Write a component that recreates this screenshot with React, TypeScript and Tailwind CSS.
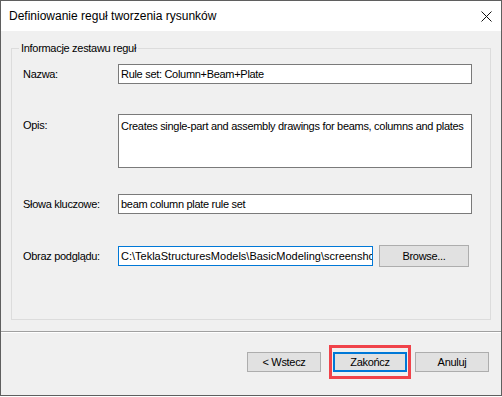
const font = { fontFamily: '"Liberation Sans", Arial, sans-serif' };

const Field = ({ value, focused = false, w = 'w-[354px]' }: { value: string; focused?: boolean; w?: string }) => (
  <div
    className={`${w} h-[20px] bg-white border ${
      focused ? 'border-[#0078d7] tracking-normal' : 'border-[#7a7a7a]'
    } flex items-center pl-[2px] overflow-hidden whitespace-nowrap`}
  >
    {value}
  </div>
);

const Btn = ({ label, focused = false }: { label: string; focused?: boolean }) => (
  <button
    className={`h-[20px] bg-[#e1e1e1] flex items-center justify-center text-[11px] text-black ${
      focused ? 'w-[74px] border-2 border-[#0078d7]' : 'w-[74px] border border-[#adadad]'
    }`}
  >
    {label}
  </button>
);

export default function App() {
  return (
    <div className="w-[502px] h-[397px] bg-white text-[11px] text-black" style={font}>
      <div className="w-[502px] h-[396px] border border-[#5f5f5f] flex flex-col">
        {/* title bar */}
        <div className="h-[30px] bg-white flex items-center justify-between pl-[8px] pr-[9px]">
          <span className="text-[12px]">Definiowanie reguł tworzenia rysunków</span>
          <svg width="11" height="11" viewBox="0 0 11 11" className="mt-[1px]">
            <path d="M0.5 0.5 L10.5 10.5 M10.5 0.5 L0.5 10.5" stroke="#111" strokeWidth="1" />
          </svg>
        </div>

        <div className="flex-1 bg-[#f0f0f0] flex flex-col tracking-[-0.3px]">
          {/* group box */}
          <div className="relative mt-[17px] ml-[10px] w-[480px] h-[272px] border border-[#dcdcdc]">
            <span className="absolute -top-[8px] left-[7px] px-[2px] bg-[#f0f0f0] leading-[15px]">
              Informacje zestawu reguł
            </span>

            <div className="flex items-center mt-[15px]">
              <span className="w-[106px] pl-[11px]">Nazwa:</span>
              <Field value="Rule set: Column+Beam+Plate" />
            </div>

            <div className="flex items-start mt-[30px]">
              <span className="w-[106px] pl-[11px] pt-[3px]">Opis:</span>
              <div className="w-[354px] h-[54px] bg-white border border-[#7a7a7a] pl-[2px] pt-[3px] whitespace-nowrap overflow-hidden">
                Creates single-part and assembly drawings for beams, columns and plates
              </div>
            </div>

            <div className="flex items-center mt-[26px]">
              <span className="w-[106px] pl-[11px]">Słowa kluczowe:</span>
              <Field value="beam column plate rule set" />
            </div>

            <div className="flex items-center mt-[31px]">
              <span className="w-[106px] pl-[11px]">Obraz podglądu:</span>
              <Field value="C:\TeklaStructuresModels\BasicModeling\screenshot.png" focused w="w-[255px]" />
              <button className="ml-[6px] w-[90px] h-[22px] bg-[#e1e1e1] border border-[#adadad] text-[11px]">
                Browse...
              </button>
            </div>
          </div>

          {/* separator */}
          <div className="mt-[11px] h-[2px] border-t border-[#a0a0a0] border-b border-b-white" />

          {/* buttons */}
          <div className="flex items-center justify-end mt-[12px] pr-[12px]">
            <Btn label="< Wstecz" />
            <div className="ml-[8px] border-[3px] border-[#f0434a] px-[1px] py-[4px]">
              <Btn label="Zakończ" focused />
            </div>
            <div className="ml-[4px]">
              <Btn label="Anuluj" />
            </div>
          </div>
        </div>
      </div>
    </div>
  );
}
